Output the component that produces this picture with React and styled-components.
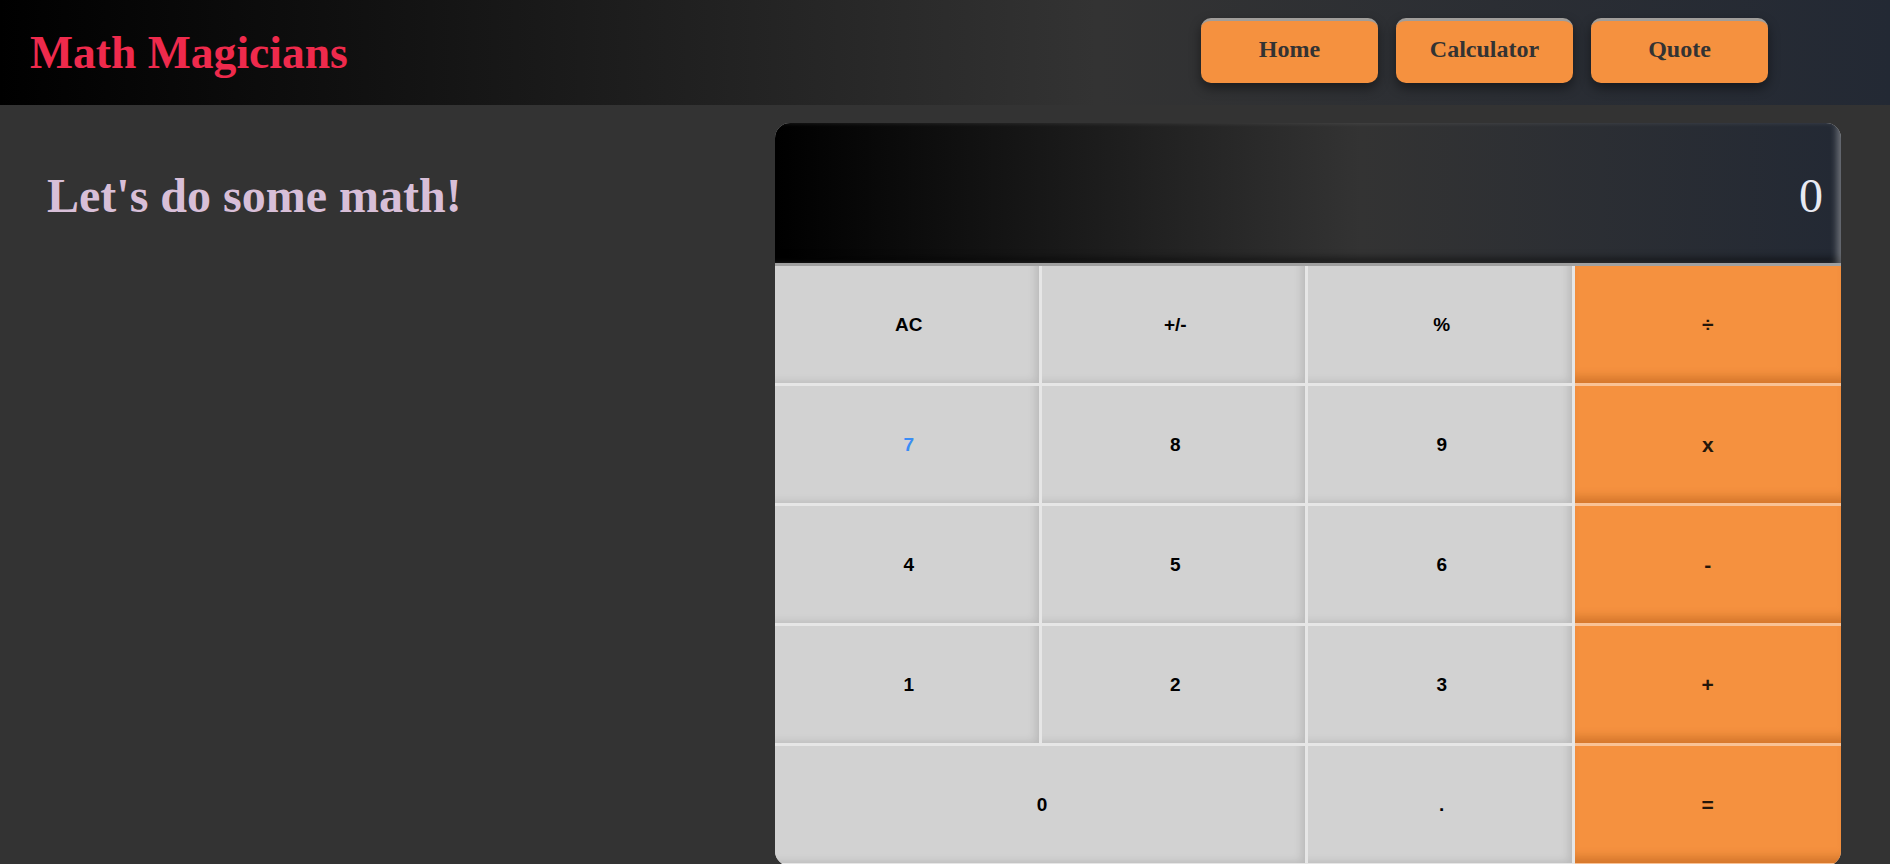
import React from "react";
import styled, { createGlobalStyle } from "styled-components";

const Global = createGlobalStyle`
  html, body { margin: 0; padding: 0; }
  body {
    background: #333333;
    font-family: "Liberation Serif", "Times New Roman", serif;
    overflow: hidden;
  }
  * { box-sizing: border-box; }
`;

const Header = styled.header`
  height: 105px;
  display: flex;
  align-items: center;
  justify-content: space-between;
  padding: 0 122px 0 30px;
  background: linear-gradient(90deg, #000000 0%, #333333 58%, #232934 100%);
`;

const Logo = styled.h1`
  margin: 0;
  font-family: "Liberation Serif", "Times New Roman", serif;
  font-weight: 700;
  font-size: 45.6px;
  color: #ef2a4c;
`;

const Nav = styled.nav`
  display: flex;
  gap: 18px;
  margin-bottom: 4px;
`;

const NavButton = styled.a`
  width: 177px;
  height: 65px;
  display: flex;
  align-items: center;
  justify-content: center;
  padding-bottom: 5px;
  background: #f5913f;
  border-top: 3px solid #a09d9a;
  border-radius: 10px;
  box-shadow: 0 5px 12px rgba(0, 0, 0, 0.45);
  font-family: "Liberation Serif", "Times New Roman", serif;
  font-weight: 700;
  font-size: 24px;
  color: #333333;
  text-decoration: none;
`;

const Main = styled.main`
  display: flex;
  justify-content: space-between;
  align-items: flex-start;
  padding: 18px 49px 0 47px;
`;

const Heading = styled.h2`
  margin: 45px 0 0;
  font-family: "Liberation Serif", "Times New Roman", serif;
  font-weight: 700;
  font-size: 48px;
  color: thistle;
`;

const Calculator = styled.section`
  width: 1066px;
  border-radius: 15px;
  overflow: hidden;
  background: #d2d2d2;
`;

const Display = styled.div`
  height: 143px;
  display: flex;
  align-items: center;
  justify-content: flex-end;
  padding: 4px 18px 0 0;
  border-bottom: 3px solid #a0a0a0;
  background: linear-gradient(90deg, #000000 0%, #333333 55%, #232934 100%);
  box-shadow: inset -7px 0 7px -3px rgba(255, 255, 255, 0.35),
    inset 0 -10px 8px -6px rgba(0, 0, 0, 0.6);
  font-family: "Liberation Serif", "Times New Roman", serif;
  font-size: 48px;
  color: #e8eaf2;
`;

const Keypad = styled.div`
  display: grid;
  grid-template-columns: repeat(4, 1fr);
  grid-auto-rows: 120px;
`;

const Key = styled.button`
  grid-column: span ${(p) => p.$span || 1};
  border: none;
  border-bottom: 3px solid rgba(255, 255, 255, 0.45);
  border-right: ${(p) => (p.$op ? "none" : "3px solid rgba(255, 255, 255, 0.45)")};
  padding: 0 0 0 ${(p) => (p.$op ? "0" : "4px")};
  background: ${(p) => (p.$op ? "#f5913f" : "#d2d2d2")};
  box-shadow: ${(p) =>
    p.$op
      ? "inset 0 -12px 10px -6px rgba(150, 70, 10, 0.35)"
      : "inset -8px -6px 8px -5px rgba(0, 0, 0, 0.12)"};
  font-family: "Liberation Sans", Arial, sans-serif;
  font-weight: 700;
  font-size: ${(p) => (p.$op ? "21px" : "19px")};
  color: ${(p) => (p.$active ? "#3a8df5" : p.$op ? "#24160a" : "#000000")};
  cursor: pointer;
`;

const keys = [
  { label: "AC" },
  { label: "+/-" },
  { label: "%" },
  { label: "÷", op: true },
  { label: "7", active: true },
  { label: "8" },
  { label: "9" },
  { label: "x", op: true },
  { label: "4" },
  { label: "5" },
  { label: "6" },
  { label: "-", op: true },
  { label: "1" },
  { label: "2" },
  { label: "3" },
  { label: "+", op: true },
  { label: "0", span: 2 },
  { label: "." },
  { label: "=", op: true },
];

export default function App() {
  return (
    <>
      <Global />
      <Header>
        <Logo>Math Magicians</Logo>
        <Nav>
          <NavButton href="#">Home</NavButton>
          <NavButton href="#">Calculator</NavButton>
          <NavButton href="#">Quote</NavButton>
        </Nav>
      </Header>
      <Main>
        <Heading>Let's do some math!</Heading>
        <Calculator>
          <Display>0</Display>
          <Keypad>
            {keys.map((k) => (
              <Key key={k.label} $op={k.op} $span={k.span} $active={k.active}>
                {k.label}
              </Key>
            ))}
          </Keypad>
        </Calculator>
      </Main>
    </>
  );
}
